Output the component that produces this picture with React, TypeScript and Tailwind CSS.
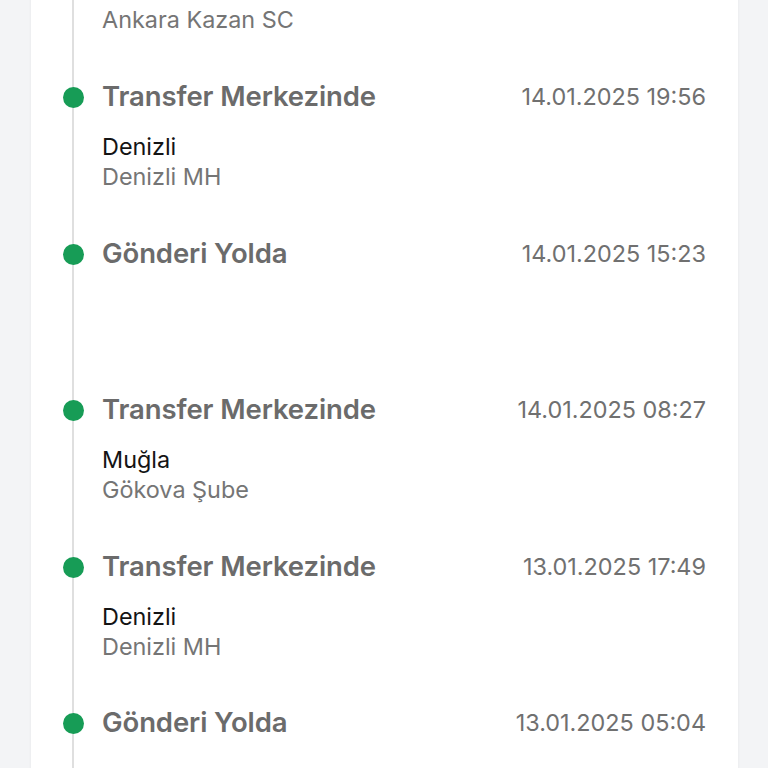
type TrackEvent = { title: string; date: string; city?: string; branch?: string }

const events: TrackEvent[] = [
  { title: 'Transfer Merkezinde', date: '14.01.2025 19:56', city: 'Denizli', branch: 'Denizli MH' },
  { title: 'Gönderi Yolda', date: '14.01.2025 15:23' },
  { title: 'Transfer Merkezinde', date: '14.01.2025 08:27', city: 'Muğla', branch: 'Gökova Şube' },
  { title: 'Transfer Merkezinde', date: '13.01.2025 17:49', city: 'Denizli', branch: 'Denizli MH' },
  { title: 'Gönderi Yolda', date: '13.01.2025 05:04' },
]

function Place({ city, branch }: { city: string; branch: string }) {
  return (
    <div>
      <div className="h-[30px] text-[23.4px] leading-[30px] text-[#141414]">{city}</div>
      <div className="h-[30px] text-[23.4px] leading-[30px] text-[#757575]">{branch}</div>
    </div>
  )
}

export default function App() {
  return (
    <div
      className="h-[768px] w-[768px] overflow-hidden bg-[#f3f4f6]"
      style={{ fontFamily: 'Inter, "Noto Sans", sans-serif' }}
    >
      <div className="relative ml-[31px] h-[800px] w-[707px] bg-white shadow-[0_0_3px_rgba(0,0,0,0.06)]">
        {/* timeline rail */}
        <div className="absolute left-[41px] top-0 h-[800px] w-[2px] bg-[#dfdfdf]" />

        {/* tail of the previous event, scrolled mostly out of view */}
        <div className="mt-[-25px] h-[106px] pl-[71px]">
          <Place city="Ankara" branch="Ankara Kazan SC" />
        </div>

        {events.map((ev, i) => (
          <div key={i} className="relative h-[156.5px] pl-[71px] pr-[32px]">
            <div className="absolute left-[31.5px] top-[6px] h-[21px] w-[21px] rounded-full bg-[#179c56]" />
            <div className="flex h-[32px] items-center justify-between">
              <span className="text-[27.5px] font-semibold tracking-[-0.1px] text-[#6b6b6b]">{ev.title}</span>
              <span className="text-[23.4px] text-[#707070]">{ev.date}</span>
            </div>
            {ev.city && ev.branch && (
              <div className="mt-[19px]">
                <Place city={ev.city} branch={ev.branch} />
              </div>
            )}
          </div>
        ))}
      </div>
    </div>
  )
}
